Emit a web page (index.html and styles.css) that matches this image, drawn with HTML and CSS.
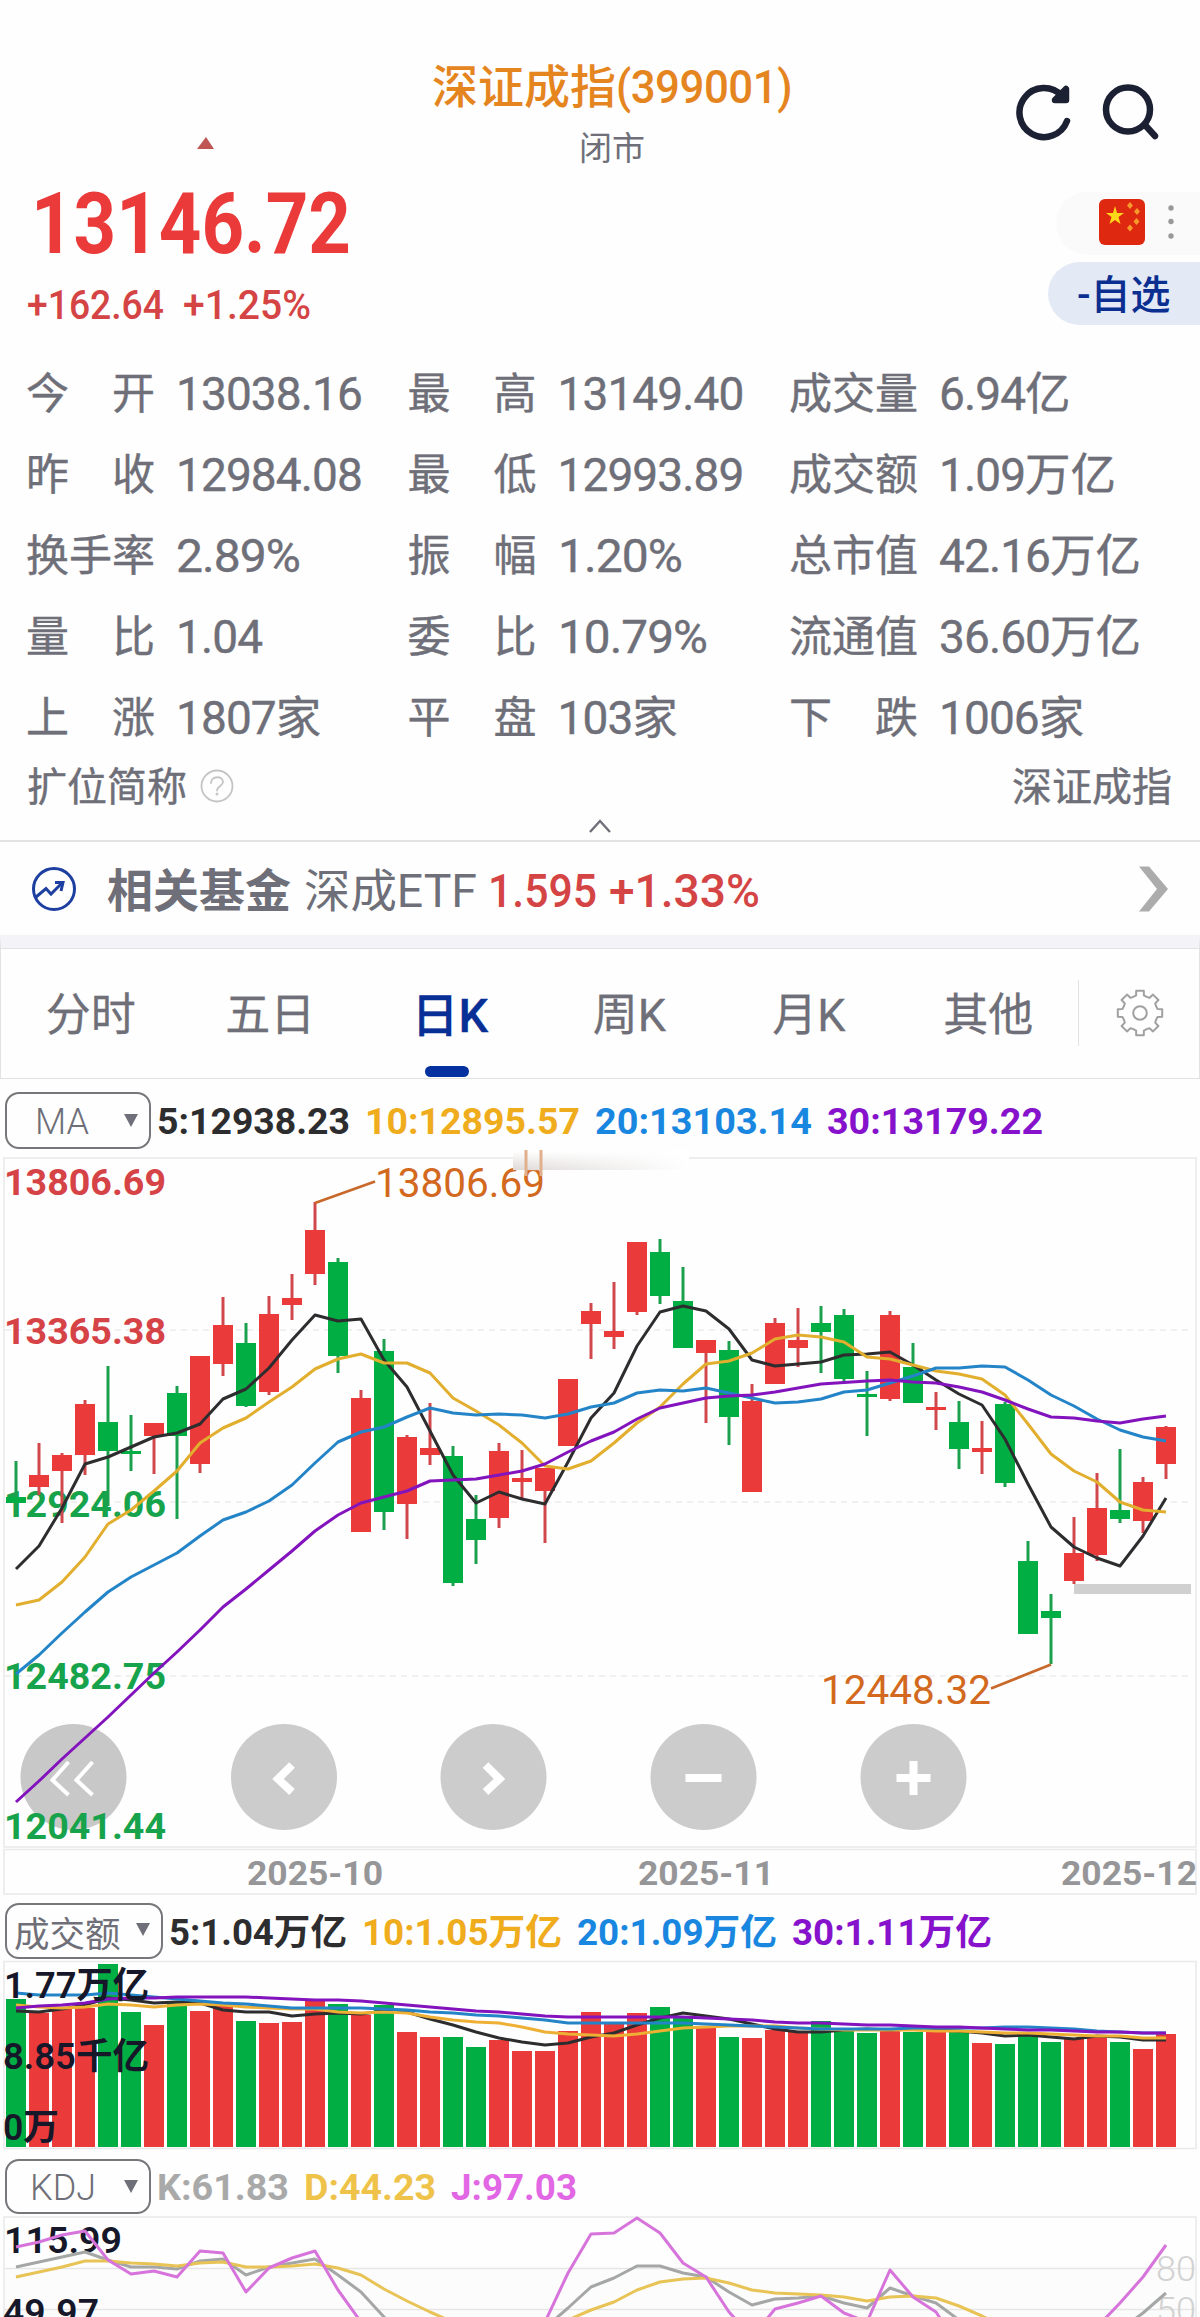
FILE: index.html
```html
<!DOCTYPE html>
<html lang="zh-CN">
<head>
<meta charset="utf-8">
<title>深证成指(399001)</title>
<link rel="stylesheet" href="styles.css">
</head>
<body>
<header class="top">
  <svg class="marker" width="20" height="14" viewBox="0 0 20 14"><path d="M10 1 L18 13 H1 Z" fill="#bf5654"/></svg>
  <div class="title">
    <h1>深证成指<span class="code" data-w="176">(399001)</span></h1>
    <div class="status">闭市</div>
  </div>
  <svg class="actions" width="150" height="70" viewBox="1010 78 150 70" fill="none" stroke="#1c2033" stroke-width="6.5" stroke-linecap="round" stroke-linejoin="round">
    <path d="M1067 121 A24.5 24.5 0 1 1 1062 96"/>
    <path d="M1066 89 V100 H1055 Z" fill="#1c2033"/>
    <circle cx="1128" cy="109.500" r="22"/>
    <path d="M1145 125 L1155 136"/>
  </svg>
</header>

<section class="quote">
  <div class="quote-main">
    <div class="price"><span>13146.72</span></div>
    <div class="change"><span data-w="137">+162.64</span><span data-w="128">+1.25%</span></div>
  </div>
  <div class="quote-side">
    <div class="market">
      <svg width="46" height="46" viewBox="0 0 46 46"><rect width="46" height="46" rx="6" fill="#df2810"/>
        <path fill="#ffd91a" d="M16 7 L18 14 H25 L19.500 18 L21.500 25 L16 21 L10.500 25 L12.500 18 L7 14 H14 Z"/>
        <g fill="#f79a2c"><path d="M31 3l3 3.500-3 3.500-3-3.500zM38 9l3 3.500-3 3.500-3-3.500zM37.500 19l3 3.500-3 3.500-3-3.500zM31 25.500l3 3.500-3 3.500-3-3.500z"/></g></svg>
      <svg width="6" height="36" viewBox="0 0 6 36" fill="#999"><circle cx="3" cy="4" r="2.700"/><circle cx="3" cy="17.500" r="2.700"/><circle cx="3" cy="32" r="2.700"/></svg>
    </div>
    <div class="watch">-自选</div>
  </div>
</section>

<section class="stats">
  <dl><dt><i>今</i><i>开</i></dt><dd>13038.16</dd></dl>
  <dl><dt><i>最</i><i>高</i></dt><dd>13149.40</dd></dl>
  <dl><dt><i>成</i><i>交</i><i>量</i></dt><dd>6.94<b>亿</b></dd></dl>
  <dl><dt><i>昨</i><i>收</i></dt><dd>12984.08</dd></dl>
  <dl><dt><i>最</i><i>低</i></dt><dd>12993.89</dd></dl>
  <dl><dt><i>成</i><i>交</i><i>额</i></dt><dd>1.09<b>万亿</b></dd></dl>
  <dl><dt><i>换</i><i>手</i><i>率</i></dt><dd data-w="124">2.89%</dd></dl>
  <dl><dt><i>振</i><i>幅</i></dt><dd data-w="124">1.20%</dd></dl>
  <dl><dt><i>总</i><i>市</i><i>值</i></dt><dd>42.16<b>万亿</b></dd></dl>
  <dl><dt><i>量</i><i>比</i></dt><dd>1.04</dd></dl>
  <dl><dt><i>委</i><i>比</i></dt><dd data-w="149">10.79%</dd></dl>
  <dl><dt><i>流</i><i>通</i><i>值</i></dt><dd>36.60<b>万亿</b></dd></dl>
  <dl><dt><i>上</i><i>涨</i></dt><dd>1807<b>家</b></dd></dl>
  <dl><dt><i>平</i><i>盘</i></dt><dd>103<b>家</b></dd></dl>
  <dl><dt><i>下</i><i>跌</i></dt><dd>1006<b>家</b></dd></dl>
</section>
<div class="alias">
  <span>扩位简称</span>
  <svg width="34" height="34" viewBox="0 0 34 34" fill="none" stroke="#c4c4c4" stroke-width="1.800" stroke-linecap="round"><circle cx="17" cy="17" r="15.500"/><path d="M11 14 C11 6.500 23 6.500 23 13 C23 17 17 17 17 21.500"/><circle cx="17" cy="25" r=".6"/></svg>
  <span class="alias-value">深证成指</span>
</div>
<div class="fold"><svg width="24" height="16" viewBox="0 0 24 16" fill="none" stroke="#707078" stroke-width="2.400"><path d="M2 14 L12 3 L22 14"/></svg></div>

<section class="fund">
  <svg width="46" height="46" viewBox="0 0 46 46" fill="none" stroke="#1d3f9f" stroke-width="3"><circle cx="23" cy="23" r="20.500"/><path d="M5 31 L15 22.500 L20 28 L30 18"/><path d="M24 16.500 H32 L30 25"/></svg>
  <b>相关基金</b><span class="fund-name" data-w="173">深成ETF</span><span class="fund-price" data-w="109">1.595</span><span class="fund-change" data-w="151">+1.33%</span>
  <svg class="more" width="32" height="48" viewBox="0 0 32 48"><path d="M2 1.500 H12 L31 24 L12 46.500 H2 L20 24 Z" fill="#acacac"/></svg>
</section>

<nav class="tabs">
  <a>分时</a><a>五日</a><a class="active">日K</a><a>周K</a><a>月K</a><a>其他</a>
  <div class="settings"><svg id="gear" width="50" height="50" viewBox="-25 -25 50 50" fill="none" stroke="#a0a0a0" stroke-width="2" stroke-linejoin="round"><circle r="6.800"/></svg></div>
</nav>

<div class="legend legend-price">
  <div class="select"><span>MA</span><em></em></div>
  <span class="m5" data-w="193">5:12938.23</span><span class="m10" data-w="215">10:12895.57</span><span class="m20" data-w="217">20:13103.14</span><span class="m30" data-w="216">30:13179.22</span>
</div>
<svg id="price" class="chart" width="1200" height="746" viewBox="0 1150 1200 746"></svg>

<div class="legend legend-volume">
  <div class="select wide"><span>成交额</span><em></em></div>
  <span class="m5" data-w="178">5:1.04万亿</span><span class="m10" data-w="200">10:1.05万亿</span><span class="m20" data-w="200">20:1.09万亿</span><span class="m30" data-w="200">30:1.11万亿</span>
</div>
<svg id="volume" class="chart" width="1200" height="191" viewBox="0 1960 1200 191"></svg>

<div class="legend legend-kdj">
  <div class="select"><span>KDJ</span><em></em></div>
  <span class="k" data-w="132">K:61.83</span><span class="d" data-w="132">D:44.23</span><span class="j" data-w="126">J:97.03</span>
</div>
<svg id="kdj" class="chart" width="1200" height="103" viewBox="0 2215 1200 103"></svg>
<script src="chart.js"></script>
</body>
</html>
```
FILE: styles.css
```css
* { box-sizing: border-box; }
html, body { margin: 0; }
body {
  width: 1200px; height: 2317px; overflow: hidden; background: #fefefe; color: #6e6f78;
  font-family: Roboto, "Noto Sans CJK SC", sans-serif;
}
svg { display: block; flex: none; }
.top { position: relative; height: 178px; padding-top: 59px; }
.title { width: 1224px; text-align: center; }
h1 { margin: 0; font-size: 46px; line-height: 56px; font-weight: 500; color: #e5851f; white-space: nowrap; }
.code { display: inline-block; letter-spacing: -0.5px; text-align: left; }
.status { margin-top: 16px; font-size: 33px; line-height: 36px; }
.marker { position: absolute; left: 196px; top: 136px; }
.actions { position: absolute; left: 1010px; top: 78px; }
.quote { display: flex; justify-content: space-between; height: 174px; }
.quote-main { padding-left: 27px; }
.price { height: 93px; padding-left: 4px; line-height: 93px; font-size: 85px; font-weight: 700; color: #ea3a3a; }
.price span { display: inline-block; transform: scaleX(.874); transform-origin: 0 50%; }
.change { display: flex; gap: 19px; line-height: 70px; font-size: 40px; font-weight: 500; color: #d54444; }
.quote-side { display: flex; flex-direction: column; align-items: flex-end; gap: 7px; padding-top: 14px; }
.market { display: flex; align-items: center; gap: 23px; width: 144px; height: 63px; padding: 0 0 3px 43px; border-radius: 32px 0 0 32px; background: #fafafa; }
.watch { width: 152px; height: 63px; padding-left: 29px; border-radius: 32px 0 0 32px; background: #e4e9f6; color: #0b2f91; font-size: 40px; font-weight: 500; line-height: 68px; }
.stats { display: grid; grid-template-columns: repeat(3, 381.500px); grid-auto-rows: 81px; padding: 2px 0 0 26px; height: 405px; -webkit-text-stroke: .4px currentColor; }
dl { display: flex; align-items: center; gap: 21px; margin: 0; }
dt { display: flex; justify-content: space-between; width: 129px; font-size: 43px; line-height: 81px; }
dt i { font-style: normal; }
dd { margin: 0; font-size: 46px; line-height: 81px; letter-spacing: -0.900px; white-space: nowrap; }
dd b { font-weight: 400; font-size: 45.500px; letter-spacing: 0; }
.alias { display: flex; align-items: center; gap: 13px; height: 58px; padding: 0 28px 0 27px; font-size: 40px; line-height: 58px; -webkit-text-stroke: .4px currentColor; }
.alias span { padding-top: 3px; }
.alias-value { margin-left: auto; }
.fold { display: flex; justify-content: center; height: 27px; padding-top: 3px; border-bottom: 2px solid #e3e3e3; }
.fund { display: flex; align-items: center; height: 93px; padding: 0 31px; font-size: 46px; line-height: 93px; }
.fund b { margin-left: 30px; padding-top: 5px; }
.fund span { padding-top: 5px; white-space: nowrap; }
.fund-name { margin-left: 13px; }
.fund-price, .fund-change { color: #d54444; font-weight: 500; }
.fund-price { margin-left: 11px; }
.fund-change { margin-left: 12px; }
.more { margin-left: auto; }
.tabs { display: flex; align-items: center; height: 144px; border: 1px solid #e2e2e4; border-top: 13px solid #f4f4f8; box-shadow: inset 0 1px #e2e2e4; }
.tabs a { position: relative; width: 179.500px; padding-top: 6px; text-align: center; font-size: 45px; line-height: 124px; -webkit-text-stroke: .3px currentColor; }
.tabs .active { color: #072f95; font-weight: 500; font-size: 47px; }
.active::after { content: ""; position: absolute; left: 65px; bottom: 1px; width: 44px; height: 11px; border-radius: 6px; background: #0530a0; }
.settings { display: flex; justify-content: center; align-items: center; flex: 1; height: 66px; padding-left: 2px; border-left: 1px solid #e2e2e2; }
.legend { display: flex; align-items: center; height: 70px; padding-left: 5px; font-size: 36px; font-weight: 700; }
.legend > span { white-space: nowrap; line-height: 56px; padding-top: 3px; margin-left: 15px; }
.legend > .select + span { margin-left: 6px; }
.legend-price { height: 71px; padding-top: 12px; }
.legend-volume { height: 64px; padding-top: 6px; }
.legend-kdj { height: 64px; padding-top: 7px; }
.select { display: flex; align-items: center; justify-content: space-between; width: 146px; height: 57px; padding: 3px 11px 0 28px; border: 2px solid #77777b; border-radius: 14px; font-size: 36px; font-weight: 300; }
.legend-kdj .select { padding-left: 23px; height: 55px; }
.select.wide { width: 158px; height: 56px; padding: 0 11px 0 7px; font-size: 35.500px; font-weight: 400; }
.select em { margin-top: -4px; border: 7px solid transparent; border-top: 13px solid #6e6f78; border-bottom: 0; }
.m5 { color: #2d2d2f; }
.m10 { color: #efac1c; }
.m20 { color: #1987e0; }
.m30 { color: #8612cb; }
.k { color: #a9a9a9; }
.d { color: #efc34a; }
.j { color: #e267e4; }
.fit { transform-origin: 0 50%; }
.chart text { font-family: Roboto, "Noto Sans CJK SC", sans-serif; }
.axis { font-size: 36px; font-weight: 700; }
.dark { font-size: 36px; font-weight: 600; fill: #16182a; }
.callout { font-size: 41px; fill: #d2691e; }
.date { font-size: 33px; font-weight: 700; fill: #969698; }
.level { font-size: 35px; font-weight: 300; fill: #d2d2d2; }
```
FILE: chart.js
```js
const STEP = 23, X0 = 16, RED = '#eb3a3a', GREEN = '#00ae43';
const x = i => X0 + STEP * i;

// direction, high, body top, body bottom, low (pixels below the chart origin)
const candles = `G311,347,353,366 R293,325,337,345 R303,305,321,373 R250,254,305,325 G216,272,301,356 G265,301,304,321
R273,273,286,324 G236,243,286,369 R206,206,314,323 R147,175,214,226 G173,193,256,257 R146,164,242,245 R124,148,155,170
R52,80,124,135 G108,112,206,223 R240,248,382,382 G189,201,362,380 R285,287,354,389 R253,298,305,315 G296,306,433,436
G345,369,390,414 R293,301,368,378 R300,328,332,349 R318,318,341,393 R229,229,296,296 R153,161,174,209 R132,181,187,199
R92,92,162,165 G89,102,146,154 G117,151,198,198 R190,190,203,273 G191,200,267,295 R234,251,342,342 R168,173,234,234
R158,190,198,217 G156,173,182,223 G159,165,229,234 G221,244,247,286 R161,165,249,251 G193,217,253,253 R242,257,260,280
G251,272,299,319 R271,298,302,324 G252,254,333,337 G391,411,484,484 G444,461,468,514 R367,403,431,434 R323,358,405,411
G299,360,369,373 R327,332,371,383 R276,277,314,329`.split(/\s+/).map(s => [s[0], ...s.slice(1).split(',').map(Number)]);

const ma = {
  '#2d2d2f': [419,396,358,314,307,297,287,283,274,249,239,218,190,165,171,169,210,237,281,325,353,342,349,354,312,268,243,196,162,156,161,179,210,216,214,212,205,204,202,215,230,244,255,289,334,377,397,408,416,386,348],
  '#e2ae2e': [455,450,432,407,374,360,341,321,293,278,268,252,237,219,209,204,213,213,223,248,261,275,293,316,319,311,293,273,257,234,214,211,203,189,185,187,192,207,209,215,221,224,229,245,274,304,321,332,352,360,362],
  '#2484c8': [524,505,483,462,442,427,415,403,386,370,362,351,335,313,292,282,277,267,258,263,265,264,265,268,264,257,253,243,240,241,238,243,248,253,252,249,242,240,233,226,218,218,216,217,230,245,256,269,280,287,291],
  '#8313bd': [652,631,609,588,567,545,523,502,480,457,439,420,401,381,365,353,347,341,331,330,329,325,321,314,302,291,282,269,258,253,248,246,245,242,238,234,232.5,231,230,232,233,237,242,250,259,267,268,271,273,269,266]
};
const bars = [119,133,129,128,84,132,145,122,131,125,141,143,142,119,124,135,125,152,157,157,167,160,171,171,151,132,143,133,127,137,148,157,158,150,152,141,150,153,151,152,152,152,163,164,153,162,158,157,162,169,154];
const barColors = 'GRRRGGRGRRGRRRGRGRRGGRRRRRRRGGRGRRRGGGRGRGRGGGRRGRR';
const volMa = {
  '#2d2d2f': [131,132,129,125,118,120,123,122,123,130,132,132,136,134,133,134,131,132,139,145,152,158,162,165,163,157,153,145,138,133,136,139,144,149,152,152,150,149,150,149,150,151,153,156,155,157,159,156,157,160,160],
  '#eeb034': [125,127,128,127,124,125,127,125,124,125,127,128,129,129,132,133,132,133,137,140,142,143,147,152,154,155,156,154,151,148,147,146,146,146,148,149,150,150,150,150,151,151,152,153,153,154,155,156,156,158,158],
  '#2484c8': [113,115,115,115,113,115,117,119,121,123,124,126,128,128,128,128,129,130,132,133,135,136,138,140,143,143,143,143,143,143,144,145,146,147,148,149,149,149,149,148,148,148,148,147,147,148,149,151,152,153,153],
  '#8313bd': [128,126,125,123,119,118,118,117,117,117,117,118,119,120,120,121,123,125,127,129,131,132,134,136,137,137,137,137,137,137,138,139,140,142,143,143,144,145,145,146,147,147,148,149,150,150,151,152,152,153,153]
};
const kdj = {
  '#a5a7a6': [387,382,377,372,380,387,387,389,381,379,395,387,383,379,395,412,437,460,480,490,490,485,465,448,428,407,398,386,386,393,397,412,425,419,418,416,423,428,408,416,423,440,460,480,490,490,480,465,450,433,413],
  '#e8c355': [397,392,387,381,381,383,384,386,383,382,387,387,386,384,388,395,409,421,432,442,455,465,460,452,440,430,422,410,402,399,398,403,410,413,414,415,417,421,417,416,418,426,436,447,465,475,480,480,475,470,460],
  '#d774db': [367,362,355,351,380,394,391,397,371,373,412,388,378,371,410,442,480,500,520,520,510,490,480,442,393,354,353,338,353,383,397,432,457,429,423,416,433,442,390,417,432,467,500,520,520,510,480,447,423,397,365]
};

const path = (series, top, color, w) => `<polyline fill="none" stroke="${color}" stroke-width="${w}" stroke-linejoin="round" points="${series.map((v, i) => x(i) + ',' + (v + top)).join(' ')}"/>`;
const lines = (set, top, w) => Object.entries(set).map(([c, s]) => path(s, top, c, w)).join('');
const text = (cls, px, py, w, s, fill) => `<text class="${cls}" x="${px}" y="${py}" textLength="${w}" lengthAdjust="spacingAndGlyphs"${fill ? ` fill="${fill}"` : ''}>${s}</text>`;
const frame = (y, h) => `<rect x="4" y="${y}" width="1192" height="${h}" fill="none" stroke="#e9e9ea" stroke-width="1.500"/>`;

let p = frame(1158, 689) + frame(1849.5, 44.5);
for (const y of [1330, 1502, 1676]) p += `<path d="M5 ${y}H1191" stroke="#ececec" stroke-width="1.500" stroke-dasharray="6 5"/>`;
const icons = ['M-5-15-21 3-5 18M19-15 3 3 19 18', 'M8-12-6 2 8 15', 'M-8-12 6 2-8 15', 'M-18 1H18', 'M-17 1H17M0-16V18'];
[73.5, 284, 493.5, 703.5, 913.5].forEach((cx, i) => {
  p += `<g transform="translate(${cx} 1777)"><circle r="53" fill="${i ? '#ccc' : '#c8c8c8'}"/><path d="${icons[i]}" fill="none" stroke="#fff" stroke-width="${i ? 8 : 4}"/></g>`;
});
[[1195, '13806.69'], [1344, '13365.38'], [1517, '12924.06'], [1689, '12482.75'], [1839, '12041.44']]
  .forEach(([y, s], i) => { p += text('axis', 4, y, 162, s, i < 2 ? '#d64347' : '#17a34b'); });
candles.forEach(([d, hi, a, b, lo], i) => {
  const c = d === 'R' ? RED : GREEN;
  p += `<path d="M${x(i)} ${hi + 1150}V${lo + 1150}" stroke="${d === 'R' ? '#d0484c' : '#1da04e'}" stroke-width="3"/><rect x="${x(i) - 10}" y="${a + 1150}" width="20" height="${b - a}" fill="${c}"/>`;
});
p += lines(ma, 1150, 3);
p += '<path d="M315 1203 L375 1181.500 M1051 1664.500 L991 1688.500" stroke="#c8692b" stroke-width="2.800"/><rect x="1074" y="1584" width="117" height="10" fill="#d0d0d0"/>';
p += text('callout', 375, 1197, 170, '13806.69') + text('callout', 821, 1703.5, 170, '12448.32');
p += '<defs><linearGradient id="sv" x2="0" y2="1"><stop stop-color="#fff"/><stop offset="1" stop-color="#ddd9d7"/></linearGradient><linearGradient id="sh"><stop offset="0" stop-color="#fff" stop-opacity="0"/><stop offset="1" stop-color="#fff"/></linearGradient></defs><rect x="513" y="1151" width="175" height="19" fill="url(#sv)"/><rect x="512" y="1150" width="177" height="21" fill="url(#sh)"/><path d="M526 1150V1176M541 1150V1176" stroke="#e0b08c" stroke-width="3"/>';
p += text('date', 247, 1885, 136, '2025-10') + text('date', 638, 1885, 136, '2025-11') + text('date', 1061, 1885, 136, '2025-12');
document.getElementById('price').innerHTML = p;

let v = frame(1961.5, 187);
bars.forEach((t, i) => { v += `<rect x="${x(i) - 10}" y="${1880 + t}" width="20" height="${267 - t}" fill="${barColors[i] === 'R' ? RED : GREEN}"/>`; });
v += lines(volMa, 1880, 3) + text('dark', 4, 1998, 145, '1.77万亿') + text('dark', 3, 2069, 146, '8.85千亿') + text('dark', 3, 2140, 56, '0万');
document.getElementById('volume').innerHTML = v;

let k = frame(2217, 200) + '<rect x="5" y="2268" width="1190" height="60" fill="#fcfcfc"/><path d="M5 2268.500H1195M5 2309.500H1195" stroke="#e6e6e6" stroke-width="1.500"/>';
k += text('level', 1156, 2281, 40, '80') + text('level', 1156, 2322, 40, '50') + text('dark', 4, 2253, 118, '115.99') + text('dark', 3, 2325, 96, '49.97') + lines(kdj, 1880, 3);
document.getElementById('kdj').innerHTML = k;

// eight-tooth settings gear
let g = '';
for (let i = 0; i < 8; i++) {
  [[-.36, 17.5], [-.22, 18], [-.17, 22.5], [.17, 22.5], [.22, 18], [.36, 17.5]].forEach(([a, r]) => {
    const t = i * Math.PI / 4 + a;
    g += (g ? 'L' : 'M') + (r * Math.sin(t)).toFixed(1) + ' ' + (-r * Math.cos(t)).toFixed(1);
  });
}
document.getElementById('gear').innerHTML += `<path d="${g}Z"/>`;

// squeeze numbers into their column widths
document.fonts.ready.then(() => document.querySelectorAll('[data-w]').forEach(el => {
  const w = +el.dataset.w, s = w / el.getBoundingClientRect().width;
  el.classList.add('fit');
  el.style.width = w + 'px';
  el.style.transform = `scaleX(${s})`;
}));
```
